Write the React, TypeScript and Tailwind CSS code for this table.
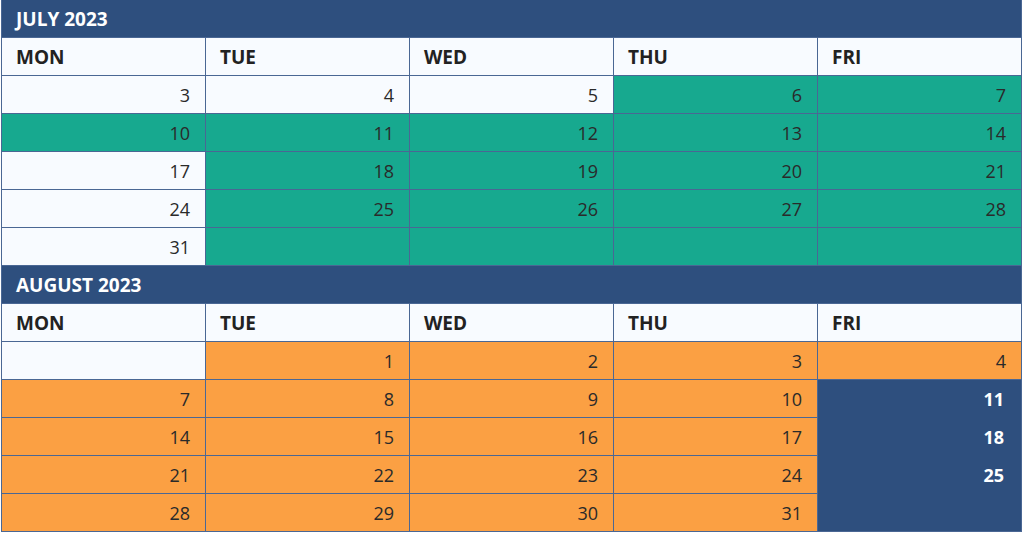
import React from 'react';

type Tone = 'white' | 'teal' | 'orange';
type Cell = { n?: number; tone: Tone };

const DAYS = ['MON', 'TUE', 'WED', 'THU', 'FRI'];

const toneClass: Record<Tone, string> = {
  white: 'bg-[#f8fbff]',
  teal: 'bg-[#17a98f]',
  orange: 'bg-[#fba043]',
};

const july: Cell[][] = [
  [{ n: 3, tone: 'white' }, { n: 4, tone: 'white' }, { n: 5, tone: 'white' }, { n: 6, tone: 'teal' }, { n: 7, tone: 'teal' }],
  [{ n: 10, tone: 'teal' }, { n: 11, tone: 'teal' }, { n: 12, tone: 'teal' }, { n: 13, tone: 'teal' }, { n: 14, tone: 'teal' }],
  [{ n: 17, tone: 'white' }, { n: 18, tone: 'teal' }, { n: 19, tone: 'teal' }, { n: 20, tone: 'teal' }, { n: 21, tone: 'teal' }],
  [{ n: 24, tone: 'white' }, { n: 25, tone: 'teal' }, { n: 26, tone: 'teal' }, { n: 27, tone: 'teal' }, { n: 28, tone: 'teal' }],
  [{ n: 31, tone: 'white' }, { tone: 'teal' }, { tone: 'teal' }, { tone: 'teal' }, { tone: 'teal' }],
];

const augFirst: Cell[] = [
  { tone: 'white' }, { n: 1, tone: 'orange' }, { n: 2, tone: 'orange' }, { n: 3, tone: 'orange' }, { n: 4, tone: 'orange' },
];
// mon-thu only, fri is one merged navy block
const augRest: number[][] = [
  [7, 8, 9, 10],
  [14, 15, 16, 17],
  [21, 22, 23, 24],
  [28, 29, 30, 31],
];

function DayCell({ cell }: { cell: Cell }) {
  return (
    <div className={`h-[37px] flex items-center justify-end pr-[15px] text-[#2a2a2a] ${toneClass[cell.tone]}`}>
      {cell.n ?? ''}
    </div>
  );
}

function TitleRow({ title }: { title: string }) {
  return (
    <div className="col-span-5 h-[37px] bg-[#2e4f7e] flex items-center pl-[14px] pt-px text-white font-bold text-[19px]">
      {title}
    </div>
  );
}

function DayNames() {
  return (
    <>
      {DAYS.map(d => (
        <div key={d} className="h-[37px] bg-[#f8fbff] flex items-center pl-[14px] pt-px font-bold text-[19px] text-[#222]">
          {d}
        </div>
      ))}
    </>
  );
}

export default function App() {
  return (
    <div className="w-[1024px] h-[538px] bg-white pl-px" style={{ fontFamily: '"Open Sans", "Liberation Sans", sans-serif' }}>
      <div className="grid grid-cols-[repeat(5,203px)] gap-px bg-[#4a6794] px-px pb-px w-fit text-[18px] leading-none">
        <TitleRow title="JULY 2023" />
        <DayNames />
        {july.map((row, i) => row.map((c, j) => <DayCell key={`j${i}-${j}`} cell={c} />))}

        <TitleRow title="AUGUST 2023" />
        <DayNames />
        {augFirst.map((c, j) => <DayCell key={`a0-${j}`} cell={c} />)}
        {augRest.map((row, i) => (
          <React.Fragment key={`ar${i}`}>
            {row.map(n => <DayCell key={`a-${n}`} cell={{ n, tone: 'orange' }} />)}
            {i === 0 && (
              <div className="row-span-4 bg-[#2e4f7e] flex flex-col text-white font-bold">
                {[11, 18, 25].map(n => (
                  <div key={n} className="h-[38px] flex items-center justify-end pr-[17px]">{n}</div>
                ))}
              </div>
            )}
          </React.Fragment>
        ))}
      </div>
    </div>
  );
}
